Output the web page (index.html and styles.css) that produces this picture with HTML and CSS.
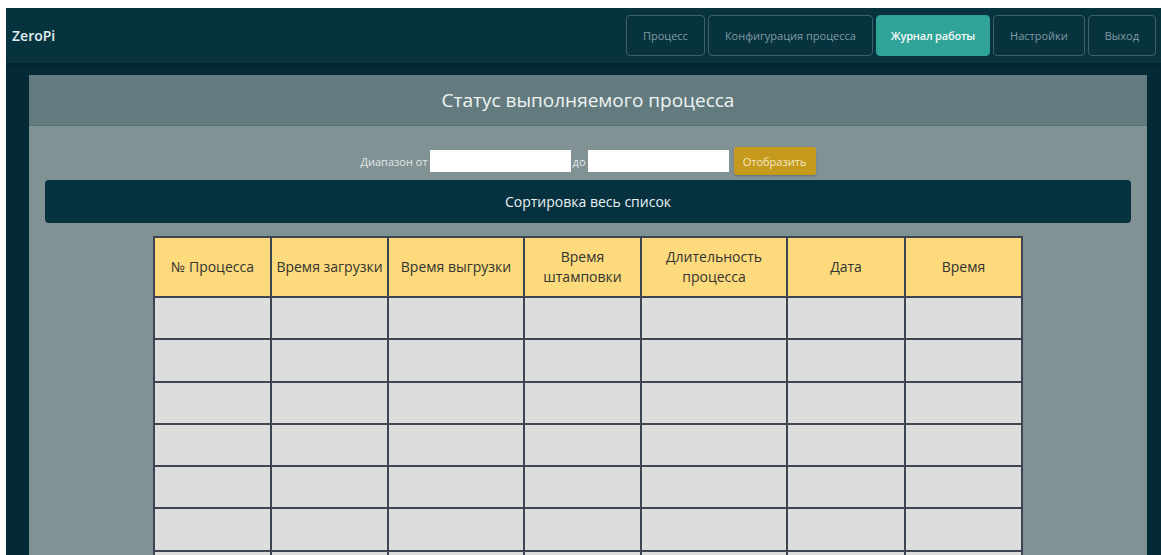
FILE: index.html
```html
<!DOCTYPE html>
<html lang="ru">
<head>
<meta charset="utf-8">
<title>ZeroPi — Журнал работы</title>
<link rel="stylesheet" href="styles.css">
</head>
<body>
<div class="app">
  <header class="navbar">
    <div class="brand">ZeroPi</div>
    <nav class="menu">
      <a class="menu-btn">Процесс</a>
      <a class="menu-btn">Конфигурация процесса</a>
      <a class="menu-btn active">Журнал работы</a>
      <a class="menu-btn">Настройки</a>
      <a class="menu-btn">Выход</a>
    </nav>
  </header>
  <main class="main">
    <section class="panel">
      <div class="panel-head">Статус выполняемого процесса</div>
      <div class="panel-body">
        <div class="filter">
          <span class="filter-label">Диапазон от</span>
          <input class="filter-input" type="text">
          <span class="filter-label">до</span>
          <input class="filter-input" type="text">
          <button class="show-btn">Отобразить</button>
        </div>
        <div class="sortbar">Сортировка весь список</div>
        <table class="log">
          <colgroup>
            <col class="w117"><col class="w117"><col class="w136"><col class="w117"><col class="w146"><col class="w118"><col class="w117">
          </colgroup>
          <thead>
            <tr>
              <th>№ Процесса</th>
              <th>Время загрузки</th>
              <th>Время выгрузки</th>
              <th>Время<br>штамповки</th>
              <th>Длительность<br>процесса</th>
              <th>Дата</th>
              <th>Время</th>
            </tr>
          </thead>
          <tbody>
            <tr><td></td><td></td><td></td><td></td><td></td><td></td><td></td></tr>
            <tr><td></td><td></td><td></td><td></td><td></td><td></td><td></td></tr>
            <tr><td></td><td></td><td></td><td></td><td></td><td></td><td></td></tr>
            <tr><td></td><td></td><td></td><td></td><td></td><td></td><td></td></tr>
            <tr><td></td><td></td><td></td><td></td><td></td><td></td><td></td></tr>
            <tr><td></td><td></td><td></td><td></td><td></td><td></td><td></td></tr>
            <tr><td></td><td></td><td></td><td></td><td></td><td></td><td></td></tr>
            <tr><td></td><td></td><td></td><td></td><td></td><td></td><td></td></tr>
          </tbody>
        </table>
      </div>
    </section>
  </main>
</div>
</body>
</html>
```
FILE: styles.css
```css
html, body {
  margin: 0;
  height: 100%;
}

body {
  padding: 8px 0 0 6px;
  box-sizing: border-box;
  background: #ffffff;
  overflow: hidden;
  font-family: "Open Sans", "Noto Sans", sans-serif;
}

.app {
  background: #032a36;
  height: 100%;
  overflow: hidden;
}

/* top navigation */
.navbar {
  height: 55px;
  background: #07333f;
  display: flex;
  align-items: center;
  justify-content: space-between;
  padding: 0 5px 0 6px;
  box-shadow: 0 1px 2px rgba(0, 0, 0, 0.25);
}

.brand {
  color: #e2eef0;
  font-size: 14px;
  font-weight: 600;
}

.menu {
  display: flex;
  gap: 3px;
}

.menu-btn {
  height: 41px;
  box-sizing: border-box;
  padding: 0 16px;
  display: flex;
  align-items: center;
  border: 1px solid #3e6168;
  border-radius: 4px;
  color: #7f9ba1;
  font-size: 11px;
  cursor: pointer;
}

.menu-btn.active {
  padding: 0 14px;
  background: #2fa397;
  border-color: #2fa397;
  color: #f4fbfa;
  font-weight: 600;
  letter-spacing: -0.2px;
}

/* content */
.main {
  padding: 12px 14px 0 23px;
}

.panel {
  background: #819294;
}

.panel-head {
  height: 50px;
  background: #637b7e;
  border-bottom: 1px solid #57706f;
  display: flex;
  align-items: center;
  justify-content: center;
  color: #eef4f4;
  font-size: 19px;
}

.panel-body {
  padding: 21px 16px 40px;
}

.filter {
  display: flex;
  align-items: center;
  justify-content: center;
  gap: 2px;
  height: 28px;
}

.filter-label {
  color: #e1e7e8;
  font-size: 11px;
}

.filter-input {
  width: 141px;
  height: 22px;
  box-sizing: border-box;
  border: none;
  margin: 0;
  padding: 0 4px;
  background: #ffffff;
}

.show-btn {
  margin-left: 3px;
  width: 82px;
  height: 28px;
  border: none;
  border-radius: 3px;
  background: #c59a1d;
  color: #f6ebc4;
  font-family: inherit;
  font-size: 11px;
  box-shadow: 0 1px 2px rgba(0, 0, 0, 0.2);
}

.sortbar {
  margin-top: 5px;
  height: 43px;
  border-radius: 4px;
  background: #06313f;
  display: flex;
  align-items: center;
  justify-content: center;
  color: #eaf2f3;
  font-size: 14px;
}

/* log table */
.log {
  margin: 13px auto 0;
  width: 868px;
  border-collapse: collapse;
  table-layout: fixed;
}

.w117 { width: 117px; }
.w118 { width: 118px; }
.w136 { width: 136px; }
.w146 { width: 146px; }

.log th,
.log td {
  border: 2px solid #3d4452;
  padding: 0;
}

.log th {
  height: 58px;
  background: #fdda7b;
  color: #333333;
  font-size: 14px;
  font-weight: 400;
  line-height: 20px;
  text-align: center;
}

.log td {
  height: 40.3px;
  background: #dddddd;
}
```
